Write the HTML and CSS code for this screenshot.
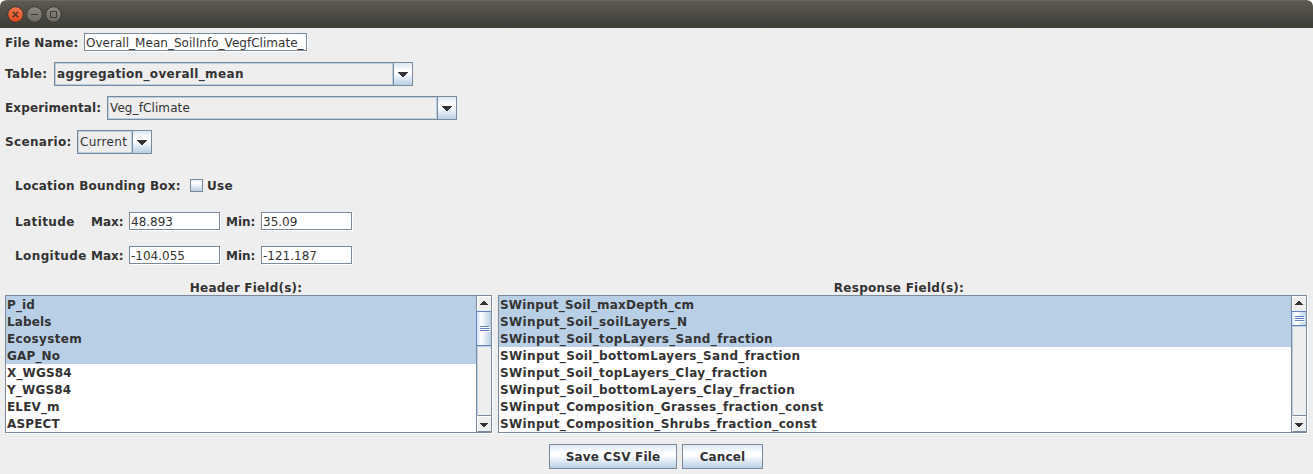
FILE: index.html
```html
<!DOCTYPE html>
<html lang="en">
<head>
<meta charset="utf-8">
<title>Export</title>
<link rel="stylesheet" href="styles.css">
</head>
<body>
<div class="window">
  <header class="titlebar">
    <svg class="controls" width="64" height="28" viewBox="0 0 64 28">
      <defs>
        <linearGradient id="close" x1="0" y1="0" x2="0" y2="1"><stop offset="0" stop-color="#f4784f"/><stop offset="1" stop-color="#dd4a1c"/></linearGradient>
        <linearGradient id="plain" x1="0" y1="0" x2="0" y2="1"><stop offset="0" stop-color="#8b8981"/><stop offset="1" stop-color="#6a6962"/></linearGradient>
      </defs>
      <g stroke="#373631">
        <circle cx="15.5" cy="14.5" r="7.8" fill="url(#close)"/>
        <circle cx="34.5" cy="14.5" r="7.8" fill="url(#plain)"/>
        <circle cx="53.5" cy="14.5" r="7.8" fill="url(#plain)"/>
      </g>
      <path d="M12.800 11.800l5.400 5.400M18.200 11.800l-5.400 5.400" stroke="#45322b" stroke-width="1.3"/>
      <path d="M31 14.5h7M50.500 11.500h6v6h-6z" stroke="#3c3b37" fill="none"/>
    </svg>
  </header>
  <main>
    <div class="row file"><label>File Name:</label><div class="field name">Overall_Mean_SoilInfo_VegfClimate_</div></div>
    <div class="row table"><label>Table:</label><div class="combo"><b class="value">aggregation_overall_mean</b><span class="drop"><svg width="10" height="5" shape-rendering="crispEdges"><path d="M0 0h10v1H9v1H8v1H7v1H6v1H4V4H3V3H2V2H1V1H0z"/></svg></span></div></div>
    <div class="row experimental"><label>Experimental:</label><div class="combo"><span class="value">Veg_fClimate</span><span class="drop"><svg width="10" height="5" shape-rendering="crispEdges"><path d="M0 0h10v1H9v1H8v1H7v1H6v1H4V4H3V3H2V2H1V1H0z"/></svg></span></div></div>
    <div class="row scenario"><label>Scenario:</label><div class="combo"><span class="value">Current</span><span class="drop"><svg width="10" height="5" shape-rendering="crispEdges"><path d="M0 0h10v1H9v1H8v1H7v1H6v1H4V4H3V3H2V2H1V1H0z"/></svg></span></div></div>
    <div class="row bounds"><label>Location Bounding Box:</label><span class="check"></span><label>Use</label></div>
    <div class="row coords lat"><label>Latitude</label><label>Max:</label><div class="field">48.893</div><label>Min:</label><div class="field">35.09</div></div>
    <div class="row coords"><label>Longitude</label><label>Max:</label><div class="field">-104.055</div><label>Min:</label><div class="field">-121.187</div></div>
    <div class="lists">
      <section class="headers">
        <h2>Header Field(s):</h2>
        <div class="pane">
          <ul><li class="on">P_id</li><li class="on">Labels</li><li class="on wide">Ecosystem</li><li class="on">GAP_No</li><li>X_WGS84</li><li>Y_WGS84</li><li>ELEV_m</li><li>ASPECT</li></ul>
          <div class="scroll"><span class="arrow up"><svg width="8" height="4" shape-rendering="crispEdges"><path d="M3 0h2v1h1v1h1v1h1v1H0V3h1V2h1V1h1z"/></svg></span><span class="thumb"><i></i><i></i><i></i></span><span class="track"></span><span class="arrow down"><svg width="8" height="4" shape-rendering="crispEdges"><path d="M0 0h8v1H7v1H6v1H5v1H3V3H2V2H1V1H0z"/></svg></span></div>
        </div>
      </section>
      <section class="responses">
        <h2>Response Field(s):</h2>
        <div class="pane">
          <ul><li class="on short">SWinput_Soil_maxDepth_cm</li><li class="on">SWinput_Soil_soilLayers_N</li><li class="on">SWinput_Soil_topLayers_Sand_fraction</li><li>SWinput_Soil_bottomLayers_Sand_fraction</li><li>SWinput_Soil_topLayers_Clay_fraction</li><li>SWinput_Soil_bottomLayers_Clay_fraction</li><li>SWinput_Composition_Grasses_fraction_const</li><li>SWinput_Composition_Shrubs_fraction_const</li></ul>
          <div class="scroll"><span class="arrow up"><svg width="8" height="4" shape-rendering="crispEdges"><path d="M3 0h2v1h1v1h1v1h1v1H0V3h1V2h1V1h1z"/></svg></span><span class="thumb"><i></i><i></i><i></i></span><span class="track"></span><span class="arrow down"><svg width="8" height="4" shape-rendering="crispEdges"><path d="M0 0h8v1H7v1H6v1H5v1H3V3H2V2H1V1H0z"/></svg></span></div>
        </div>
      </section>
    </div>
    <footer><button class="save">Save CSV File</button><button class="cancel">Cancel</button></footer>
  </main>
</div>
</body>
</html>
```
FILE: styles.css
```css
* { box-sizing: border-box; }
body { margin: 0; background: #fff; color: #333; font: 12px/16px "DejaVu Sans", sans-serif; }
.window { width: 1313px; height: 474px; background: #eee; border-radius: 6px 6px 0 0; overflow: hidden; }
.titlebar { height: 28px; background: linear-gradient(#5c5a51, #3c3b37); border-top: 1px solid #69675f; border-radius: 6px 6px 0 0; }
.controls { display: block; margin-top: -1px; }
label, b, h2, li, button { font-weight: bold; white-space: pre; letter-spacing: 0.35px; }
.row { display: flex; align-items: center; padding-left: 5px; height: 24px; }
.file { height: 18px; margin: 5px 0 11px; }
.file label { width: 79px; padding-top: 2px; letter-spacing: 0.1px; }
.field { height: 18px; width: 91px; padding-left: 1px; line-height: 18px; background: #fff; border: 1px solid #7a8a99; box-shadow: 1px 1px 0 #fff; white-space: nowrap; overflow: hidden; }
.field.name { width: 223px; letter-spacing: 0.03px; }
.table, .experimental { margin-bottom: 10px; }
.table label { width: 49px; }
.table .combo { width: 359px; }
.experimental label { width: 102px; letter-spacing: 0.12px; }
.experimental .combo { width: 350px; }
.experimental .value { letter-spacing: 0.1px; }
.scenario label { width: 72px; }
.scenario .combo { width: 75px; }
.scenario .value { letter-spacing: 0.3px; }
.combo { display: flex; height: 24px; border: 1px solid #7a8a99; }
.value { flex: 1; border: 1px solid #b8cfe5; padding-left: 1px; line-height: 20px; }
.drop { width: 19px; border-left: 1px solid #7a8a99; padding: 9px 0 0 4px; background: linear-gradient(#dde8f3, #fff 35%, #fff 45%, #b8cfe5); }
svg { display: block; fill: #333; }
.bounds { height: 14px; margin: 24px 0 20px; padding-left: 15px; }
.bounds label { padding-top: 2px; }
.bounds label:first-child { width: 175px; letter-spacing: 0.25px; }
.check { width: 13px; height: 13px; margin-right: 4px; border: 1px solid #7a8a99; background: linear-gradient(#eef3f9, #fff 30%, #b8cfe5); }
.coords { height: 18px; padding-left: 15px; }
.coords label { padding-top: 2px; letter-spacing: 0; }
.lat { margin-bottom: 16px; }
.coords label:nth-child(1) { width: 76px; letter-spacing: 0.4px; }
.coords label:nth-child(2) { width: 38px; }
.coords label:nth-child(4) { width: 35px; margin-left: 6px; }
.lists { display: flex; gap: 6px; padding: 15px 5px 0; }
.headers { width: 487px; }
.responses { width: 809px; }
h2 { margin: 0; height: 16px; padding-right: 5px; font-size: 12px; line-height: 18px; text-align: center; letter-spacing: 0.2px; }
.responses h2 { padding-right: 7px; letter-spacing: 0.27px; }
.pane { display: flex; height: 138px; border: 1px solid #7a8a99; box-shadow: 1px 1px 0 #fff; background: #fff; }
ul { flex: 1; margin: 0; padding: 0; list-style: none; overflow: hidden; }
li { height: 17px; padding-left: 1px; line-height: 18px; }
.headers li { letter-spacing: 0.15px; }
.headers .wide { letter-spacing: 0.35px; }
.short { letter-spacing: 0.2px; }
.on { background: #b8cfe5; }
.scroll { display: flex; flex-direction: column; width: 15px; border-left: 1px solid #7a8a99; background: #eee; }
.arrow { height: 15px; padding: 4px 0 0 2px; border-top: 1px solid #fff; border-left: 1px solid #fff; }
.down { height: 17px; padding: 6px 0 0 2px; border-top: 1px solid #7a8a99; box-shadow: inset 0 1px #fff; border-bottom: 1px solid #7a8a99; }
.thumb { display: flex; flex-direction: column; justify-content: center; gap: 1px; height: 35px; margin-left: -1px; padding-left: 3px; border: 1px solid #6382bf; border-width: 1px 0 1px 1px; background: linear-gradient(90deg, #d5e2ef, #fff 30%, #b8cfe5); }
.thumb i { width: 9px; height: 1px; background: #6382bf; box-shadow: 1px 1px #fff; }
.responses .thumb { height: 15px; }
.track { flex: 1; border-left: 1px solid #b8cfe5; border-top: 1px solid #b8cfe5; }
.down svg { margin-top: 1px; }
footer { display: flex; justify-content: center; gap: 5px; padding: 11px 1px 0 0; }
button { height: 25px; padding: 0; border: 1px solid #7a8a99; background: linear-gradient(#dde8f3, #fff 35%, #fff 45%, #b8cfe5); color: #333; font: bold 12px/22px "DejaVu Sans", sans-serif; letter-spacing: 0.15px; }
.save { width: 128px; }
.cancel { width: 81px; }
```
